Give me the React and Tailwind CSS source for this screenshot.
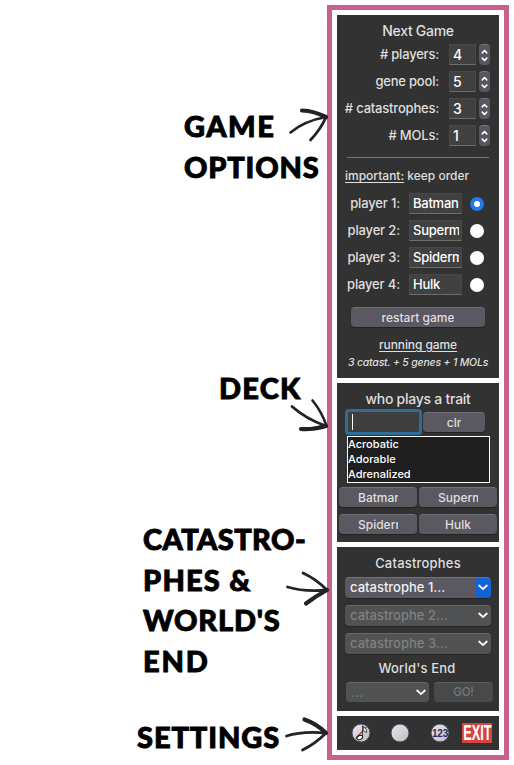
import React from "react";

const Chevron = ({ className }) => (
  <svg className={className} width="10" height="7" viewBox="0 0 10 7" fill="none">
    <path d="M1.2 1.5 5 5.1 8.8 1.5" stroke="#fff" strokeWidth="1.8" strokeLinecap="round" strokeLinejoin="round" />
  </svg>
);

const Stepper = () => (
  <div className="ml-[3px] flex h-[21px] w-[11px] items-center justify-center rounded-[4px] border-t border-[#77757d] bg-[#58565e]">
    <svg width="7" height="13" viewBox="0 0 7 13" fill="none" stroke="#fff" strokeWidth="1.5" strokeLinecap="round" strokeLinejoin="round">
      <path d="M1.2 3.9 3.5 1.6 5.8 3.9M1.2 9.1 3.5 11.4 5.8 9.1" />
    </svg>
  </div>
);

const Option = ({ label, value }) => (
  <div className="flex h-[27px] items-center">
    <span className="w-[102px] whitespace-nowrap text-right tracking-[-0.2px]">{label}</span>
    <div className="ml-[10px] h-[21px] w-[27px] border border-b-[#6c6c6c] border-[#484848] bg-[#414141] pl-[3px] text-[14px] leading-[19px] text-white">{value}</div>
    <Stepper />
  </div>
);

const Player = ({ n, name, on }) => (
  <div className="flex h-[27px] items-center">
    <span className="w-[63px] whitespace-nowrap text-right tracking-[-0.15px]">player {n}:</span>
    <div className="ml-[9px] h-[21px] w-[53px] border border-b-[#6c6c6c] border-[#484848] bg-[#414141] pl-[3px] pr-[2px] leading-[19px] tracking-[-0.25px] text-white">
      <div className="overflow-hidden whitespace-nowrap">{name}</div>
    </div>
    <div className={`ml-[8px] flex size-[14px] items-center justify-center rounded-full ${on ? "bg-[#2478ea]" : "bg-white"}`}>
      {on && <div className="size-[6px] rounded-full bg-white" />}
    </div>
  </div>
);

const Button = ({ children, className, clip = "" }) => (
  <div className={`flex items-center justify-center rounded-[4px] border-t border-[#737178] bg-[#5a5860] text-[12px] shadow-[0_1px_1px_#222] ${className}`}>
    <span className={`overflow-hidden whitespace-nowrap leading-[18px] ${clip}`}>{children}</span>
  </div>
);

const Select = ({ label, active }) => (
  <div className={`flex h-[21px] w-[146px] items-center overflow-hidden rounded-[4px] border-t shadow-[0_1px_1px_#222] ${active ? "border-[#737178] bg-[#5a5860] text-[#f0f0f0]" : "border-[#686868] bg-[#515253] text-[#808080]"}`}>
    <span className="grow whitespace-nowrap pl-[5px]">{label}</span>
    <div className={`-mt-px flex h-[21px] w-[16px] items-center justify-center ${active ? "bg-[#1263d8]" : ""}`}>
      <Chevron />
    </div>
  </div>
);

const Disc = ({ children }) => (
  <svg className="block" width="20" height="20" viewBox="0 0 20 20">
    <defs>
      <linearGradient id="disc" x1="0" y1="0" x2="1" y2="1">
        <stop offset="0" stopColor="#e8e8e8" />
        <stop offset="1" stopColor="#bdbdc0" />
      </linearGradient>
    </defs>
    <circle cx="10" cy="10" r="9" fill="url(#disc)" stroke="#45456f" strokeWidth="1" />
    {children}
  </svg>
);

const Arrow = ({ className, lines, ...box }) => (
  <svg className={`absolute ${className}`} {...box} fill="none" stroke="#232323" strokeLinecap="round" strokeLinejoin="round">
    {lines.map(([d, w]) => <path key={d} d={d} strokeWidth={w} />)}
  </svg>
);

export default function App() {
  return (
    <div className="relative flex h-[765px] w-[514px] overflow-hidden bg-white">
      <div className="w-[327px] shrink-0 whitespace-nowrap pt-[105px] font-['Lato',sans-serif] text-[29px] font-black leading-[41px] text-black [-webkit-text-stroke:0.9px_#000]">
        <div className="ml-[184px]">
          <div className="tracking-[1.5px]">GAME</div>
          <div className="tracking-[0.8px]">OPTIONS</div>
        </div>
        <div className="ml-[219px] mt-[180px] tracking-[1.2px]">DECK</div>
        <div className="ml-[143px] mt-[110px]">
          <div className="tracking-[0.4px]">CATASTRO-</div>
          <div className="tracking-[1.2px]">PHES &amp;</div>
          <div className="-mt-px tracking-[0.8px]">WORLD'S</div>
          <div className="tracking-[1.8px]">END</div>
        </div>
        <div className="ml-[137px] mt-[35px] tracking-[0.9px]">SETTINGS</div>
      </div>

      <div className="mt-[5px] flex h-[755px] w-[182px] shrink-0 flex-col gap-[5px] border-[5px] border-[#c9618f] bg-white p-[5px] font-['Inter',sans-serif] text-[13px] font-medium text-[#dfdfdf]">
        <section className="h-[363px] bg-[#323232]">
          <h2 className="h-[26px] pt-[6px] text-center text-[14px] leading-[20px] tracking-[-0.3px]">Next Game</h2>
          <Option label="# players:" value="4" />
          <Option label="gene pool:" value="5" />
          <Option label="# catastrophes:" value="3" />
          <Option label="# MOLs:" value="1" />
          <div className="mx-[10px] mt-[8px] h-px bg-[#757575]" />
          <div className="mt-[8px] pl-[8px] text-[12px] leading-[20px]"><span className="underline underline-offset-2">important:</span> keep order</div>
          <div className="mt-[4px]">
            <Player n={1} name="Batman" on />
            <Player n={2} name="Superman" />
            <Player n={3} name="Spiderman" />
            <Player n={4} name="Hulk" />
          </div>
          <Button className="mx-auto mt-[9px] h-[20px] w-[134px]">restart game</Button>
          <div className="mt-[8px] text-center text-[12px] leading-[20px] tracking-[-0.1px] underline underline-offset-2">running game</div>
          <div className="whitespace-nowrap text-center text-[10.5px] italic leading-[16px] tracking-[-0.2px]">3 catast. + 5 genes + 1 MOLs</div>
        </section>

        <section className="h-[159px] bg-[#323232]">
          <h2 className="h-[26px] pt-[6px] text-center text-[14px] leading-[20px] tracking-[-0.25px]">who plays a trait</h2>
          <div className="flex items-center pl-[8px]">
            <div className="flex h-[26px] w-[77px] items-center rounded-[4px] border-[3px] border-[#2f6c96] bg-[#3e3e3e] pl-[4px]">
              <div className="h-[16px] w-px bg-white" />
            </div>
            <Button className="ml-px h-[20px] w-[62px]">clr</Button>
          </div>
          <div className="ml-[10px] mt-px h-[47px] w-[143px] border border-white bg-[#1e1e1e] text-[11px] leading-[15px] text-white">
            <div>Acrobatic</div>
            <div>Adorable</div>
            <div>Adrenalized</div>
          </div>
          <div className="mt-[4px] grid grid-cols-2 gap-x-[2px] gap-y-[7px] px-[2px]">
            <Button className="h-[20px]" clip="w-[40px]">Batman</Button>
            <Button className="h-[20px]" clip="w-[40px]">Superman</Button>
            <Button className="h-[20px]" clip="w-[40px]">Spiderman</Button>
            <Button className="h-[20px]">Hulk</Button>
          </div>
        </section>

        <section className="h-[164px] bg-[#323232]">
          <h2 className="h-[30px] pt-[6px] text-center leading-[20px] tracking-[0.2px]">Catastrophes</h2>
          <div className="flex flex-col gap-[7px] pl-[8px]">
            <Select label="catastrophe 1..." active />
            <Select label="catastrophe 2..." />
            <Select label="catastrophe 3..." />
          </div>
          <h2 className="mt-[4px] pr-[2px] text-center leading-[20px] tracking-[0.2px]">World's End</h2>
          <div className="mt-[4px] flex items-center pl-[9px] text-[#777]">
            <div className="flex h-[20px] w-[83px] items-center justify-between rounded-[4px] border-t border-[#686868] bg-[#515253] pl-[5px] pr-[3px]">
              <span>...</span>
              <Chevron />
            </div>
            <div className="ml-[5px] flex h-[20px] w-[59px] items-center justify-center rounded-[4px] border-t border-[#5d5d5d] bg-[#48494a] text-[11.5px] tracking-[-0.2px]">GO!</div>
          </div>
        </section>

        <section className="flex h-[34px] items-center bg-[#323232] pl-[14px]">
          <Disc>
            <path d="M4.5 15.5 15.5 4" stroke="#c23b3b" strokeWidth="1.2" />
            <path d="M11.6 13V2.8L15.5 6.6" stroke="#333" strokeWidth=".9" fill="none" />
            <path d="m12 3.4 3.6 3.4v2.8l-3.2-2Z" fill="#fff" stroke="#222" strokeWidth=".8" />
            <ellipse cx="8.8" cy="14.6" rx="3" ry="2" transform="rotate(-25 8.8 14.6)" fill="#fff" stroke="#111" strokeWidth="1" />
          </Disc>
          <div className="ml-[19px]"><Disc /></div>
          <div className="ml-[20px]">
            <Disc>
              <text x="10" y="13.6" textAnchor="middle" fontFamily="Liberation Sans, sans-serif" fontWeight="bold" fontSize="10" letterSpacing="-0.2" fill="#2b2b68">123</text>
            </Disc>
          </div>
          <div className="ml-[12px] flex h-[20px] w-[30px] items-center justify-center bg-[#d6443f]">
            <span className="inline-block scale-x-[0.58] font-['Liberation_Sans',sans-serif] text-[22px] font-bold leading-[20px] text-white">EXIT</span>
          </div>
        </section>
      </div>

      <Arrow className="left-[284px] top-[103px]" width="46" height="42" viewBox="284 103 46 42"
        lines={[["M290.5 132.5Q304 121 326 117", 2.6], ["M302 110.5Q314 111 326 117", 4.2], ["M326 117Q321 129 310.5 140", 2.8]]} />
      <Arrow className="left-[286px] top-[395px]" width="46" height="42" viewBox="286 395 46 42"
        lines={[["M292 406.5Q306 419 326 426", 2.8], ["M312.5 400.5Q322 412 326.5 426", 2.6], ["M326 426Q312 430 301 429", 4.2]]} />
      <Arrow className="left-[282px] top-[567px]" width="50" height="42" viewBox="282 567 50 42"
        lines={[["M287.5 587Q304 592 327 590", 2.8], ["M303 573Q316 579 327 590", 2.8], ["M327 590Q316 596 306 603.5", 4.2]]} />
      <Arrow className="left-[282px] top-[713px]" width="50" height="42" viewBox="282 713 50 42"
        lines={[["M286.5 736Q302 731 326 733", 2.8], ["M304.5 719.5Q317 724 326 733", 4.2], ["M326 733Q315 744 302.5 750", 2.8]]} />
    </div>
  );
}
